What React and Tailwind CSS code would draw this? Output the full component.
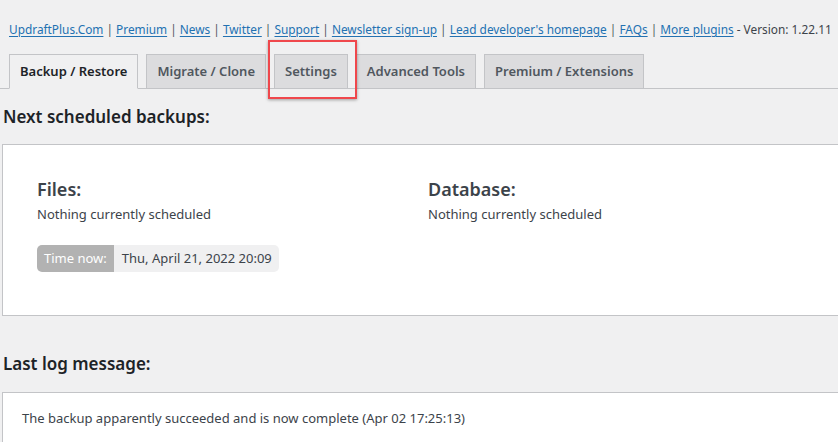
import React from "react";

const links = [
  "UpdraftPlus.Com",
  "Premium",
  "News",
  "Twitter",
  "Support",
  "Newsletter sign-up",
  "Lead developer's homepage",
  "FAQs",
  "More plugins",
];

const tabs = [
  "Backup / Restore",
  "Migrate / Clone",
  "Settings",
  "Advanced Tools",
  "Premium / Extensions",
];

export default function App() {
  return (
    <div
      className="relative w-full h-[442px] overflow-hidden bg-[#f0f0f1] text-[#3c434a]"
      style={{ fontFamily: '"Noto Sans", "Open Sans", sans-serif' }}
    >
      <p className="pl-[9px] pt-[19px] text-[11.85px] leading-[20px] whitespace-nowrap">
        {links.map((l, i) => (
          <React.Fragment key={l}>
            <a className="text-[#2271b1] underline underline-offset-2 decoration-1">{l}</a>
            {i < links.length - 1 ? (
              <span className="text-[#50575e]"> | </span>
            ) : null}
          </React.Fragment>
        ))}
        <span> - Version: 1.22.11</span>
      </p>

      <div className="mt-[15px] flex gap-2 pl-[9px] border-b border-[#c3c4c7] h-[35px]">
        {tabs.map((t, i) => (
          <div
            key={t}
            className={
              "h-[35px] px-[10px] flex items-center text-[13px] font-semibold border border-[#c3c4c7] whitespace-nowrap " +
              (i === 0
                ? "bg-[#f0f0f1] text-[#1d2327] border-b-[#f0f0f1]"
                : "bg-[#dcdcde] text-[#50575e]")
            }
          >
            {t}
          </div>
        ))}
      </div>

      <div className="absolute left-[268px] top-[40px] w-[89px] h-[59px] border-2 border-[#ef474c] shadow-[0_1px_3px_rgba(0,0,0,0.35)]" />

      <h2 className="pl-[3px] mt-[16px] text-[17px] leading-[24px] font-semibold text-[#1d2327]">
        Next scheduled backups:
      </h2>

      <div className="ml-[2px] mt-[15px] h-[172px] bg-white border border-[#c3c4c7] border-r-0 pl-[34px] pt-[32px]">
        <div className="flex">
          <div className="w-[391px]">
            <div className="text-[18px] leading-[24px] font-semibold text-[#3c434a]">Files:</div>
            <div className="mt-[3px] text-[13px] leading-[20px]">Nothing currently scheduled</div>
          </div>
          <div>
            <div className="text-[18px] leading-[24px] font-semibold text-[#3c434a]">Database:</div>
            <div className="mt-[3px] text-[13px] leading-[20px]">Nothing currently scheduled</div>
          </div>
        </div>
        <div className="mt-[21px] inline-flex h-[27px] rounded-[5px] overflow-hidden text-[13px]">
          <span className="bg-[#b2b2b2] text-white flex items-center px-[7px]">Time now:</span>
          <span className="bg-[#f0f0f1] text-[#3c434a] flex items-center pl-[8px] pr-[7px]">
            Thu, April 21, 2022 20:09
          </span>
        </div>
      </div>

      <h2 className="pl-[3px] mt-[36px] text-[17px] leading-[24px] font-semibold text-[#1d2327]">
        Last log message:
      </h2>

      <div className="ml-[2px] mt-[16px] h-[60px] bg-white border border-[#c3c4c7] border-r-0 pl-[19px] pt-[15px] text-[13px] leading-[20px] text-[#3c434a]">
        The backup apparently succeeded and is now complete (Apr 02 17:25:13)
      </div>
    </div>
  );
}
